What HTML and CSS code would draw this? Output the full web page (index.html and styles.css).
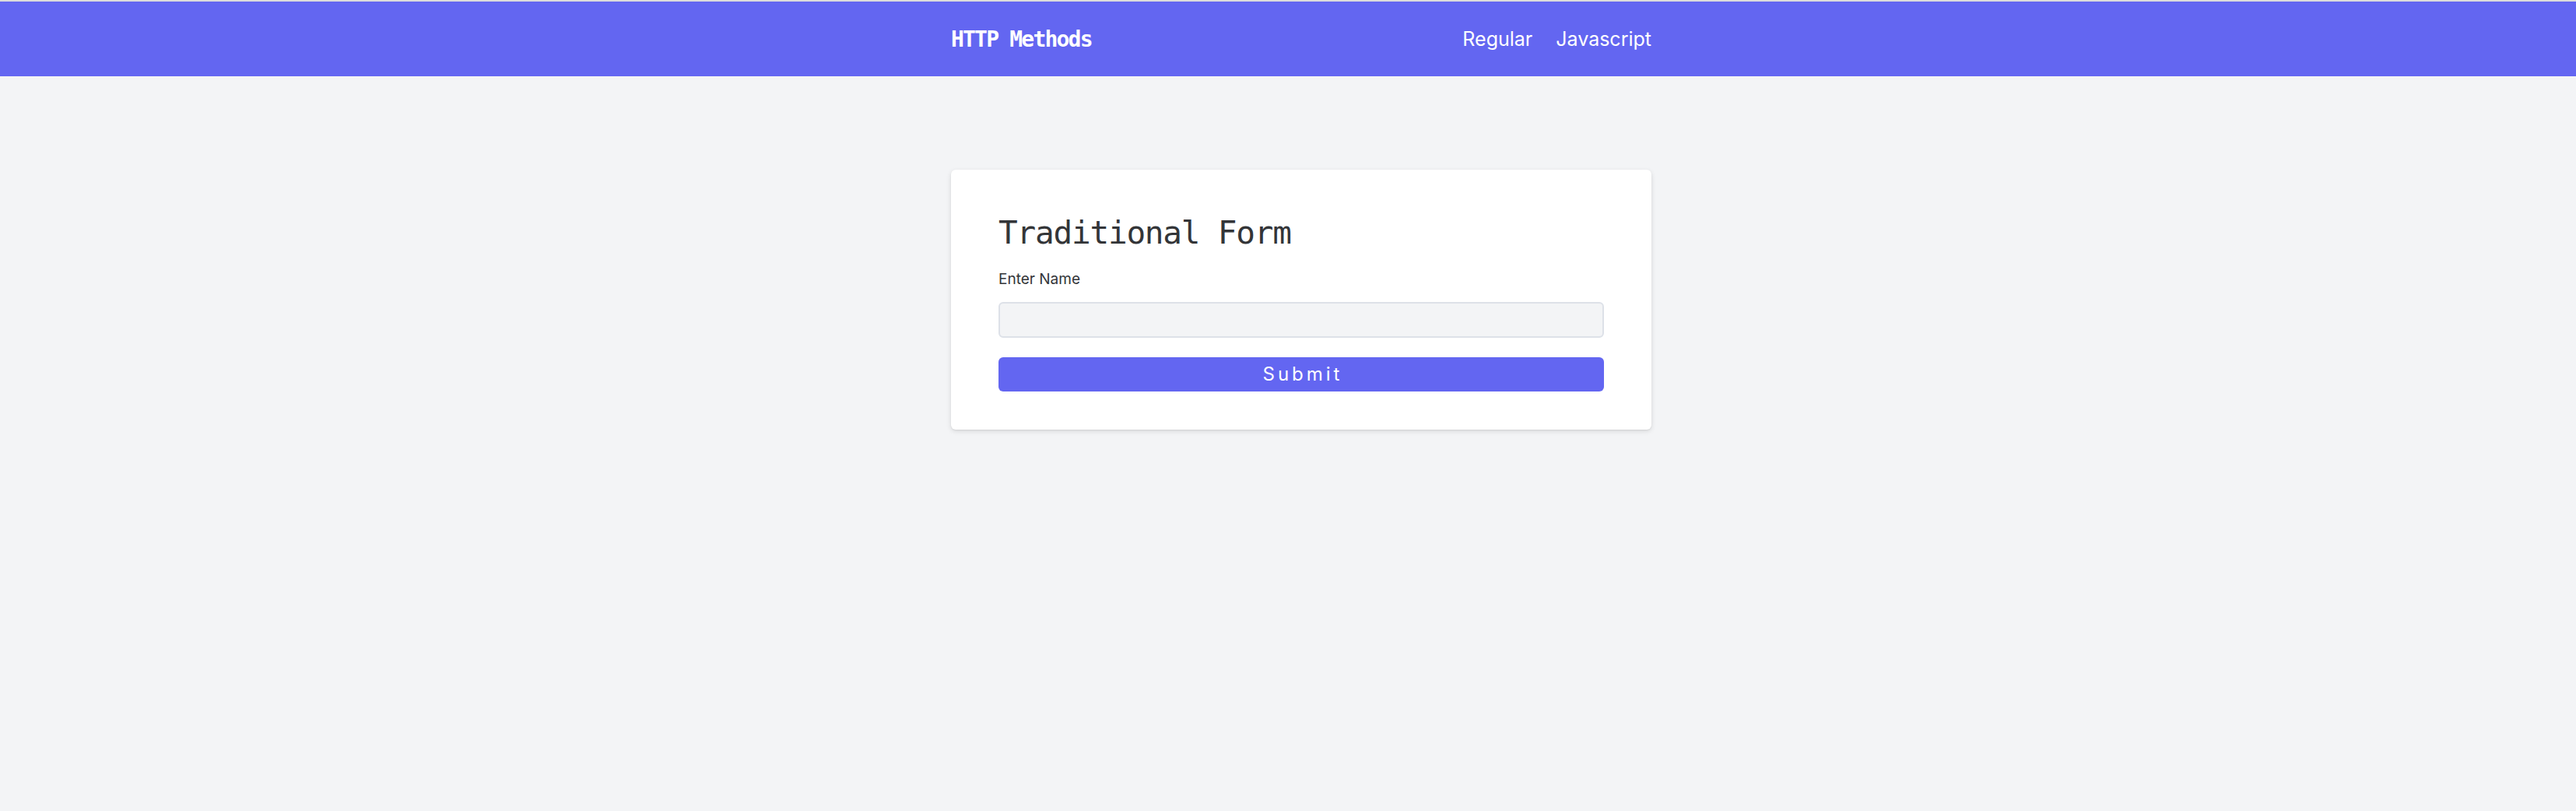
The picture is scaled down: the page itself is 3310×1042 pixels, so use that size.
FILE: index.html
```html
<!DOCTYPE html>
<html lang="en">
<head>
<meta charset="utf-8">
<title>HTTP Methods</title>
<link rel="stylesheet" href="styles.css">
</head>
<body>
<nav class="navbar">
  <div class="container nav-inner">
    <a class="brand" href="#">HTTP Methods</a>
    <div class="nav-links">
      <a href="#">Regular</a>
      <a href="#">Javascript</a>
    </div>
  </div>
</nav>
<main class="container">
  <form class="card">
    <h1 class="title">Traditional Form</h1>
    <label class="label" for="name">Enter Name</label>
    <input class="input" id="name" type="text">
    <button class="btn" type="submit">Submit</button>
  </form>
</main>
</body>
</html>
```
FILE: styles.css
```css
* { box-sizing: border-box; }
html, body { margin: 0; padding: 0; }
body {
  background: #f3f4f6;
  border-top: 2px solid #dcdcdc;
  min-height: 100vh;
  font-family: "Inter", "Noto Sans", sans-serif;
}
.container {
  width: 934px;
  padding-left: 34px;
  margin: 0 auto;
}
.navbar {
  background: #6366f1;
  height: 96px;
}
.nav-inner {
  height: 100%;
  display: flex;
  align-items: center;
  justify-content: space-between;
}
.brand {
  color: #fff;
  text-decoration: none;
  font-family: "DejaVu Sans Mono", monospace;
  font-weight: bold;
  font-size: 28px;
  letter-spacing: -1.8px;
}
.nav-links {
  display: flex;
  gap: 30px;
}
.nav-links a {
  color: #fff;
  text-decoration: none;
  font-size: 25px;
}
main.container { padding-top: 120px; }
.card {
  background: #fff;
  border-radius: 6px;
  box-shadow: 0 2px 6px rgba(0,0,0,0.12), 0 1px 2px rgba(0,0,0,0.06);
  padding: 57px 61px 49px;
  display: flex;
  flex-direction: column;
}
.title {
  margin: 0;
  font-family: "DejaVu Sans Mono", monospace;
  font-weight: normal;
  font-size: 41px;
  letter-spacing: -1.2px;
  line-height: 1.2;
  color: #333538;
}
.label {
  margin-top: 24px;
  font-size: 19px;
  color: #333538;
  line-height: 1.2;
}
.input {
  margin-top: 17px;
  height: 46px;
  width: 100%;
  background: #f3f4f6;
  border: 2px solid #dde1e8;
  border-radius: 6px;
  font-size: 20px;
}
.btn {
  margin-top: 25px;
  height: 44px;
  width: 100%;
  background: #6366f1;
  color: #fff;
  border: none;
  border-radius: 6px;
  font-family: "Inter", sans-serif;
  font-size: 24px;
  letter-spacing: 4px;
  padding: 0 0 0 4px;
}
```
